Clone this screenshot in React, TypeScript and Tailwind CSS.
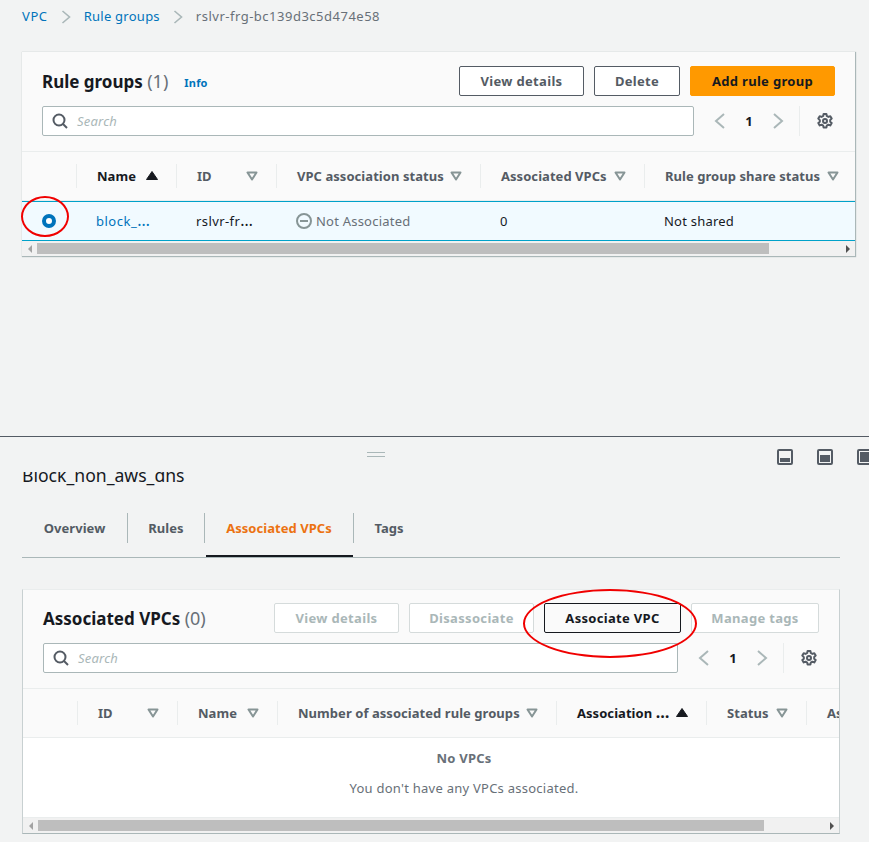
import React from "react";

const Down = () => (
  <svg width="12" height="10" viewBox="0 0 12 10" className="shrink-0">
    <path d="M1.5 1.5h9L6 8.5z" fill="none" stroke="#879596" strokeWidth="2" strokeLinejoin="round" />
  </svg>
);
const Up = () => (
  <svg width="12" height="10" viewBox="0 0 12 10" className="shrink-0">
    <path d="M6 .5L11.5 8.5H.5z" fill="#16191f" stroke="#16191f" strokeLinejoin="round" />
  </svg>
);
const Search = () => (
  <svg width="16" height="16" viewBox="0 0 16 16" fill="none" stroke="#545b64" strokeWidth="2">
    <circle cx="7" cy="7" r="5.5" />
    <path d="M11 11l4 4" />
  </svg>
);
const Chevron = ({ left }: { left?: boolean }) => (
  <svg width="12" height="16" viewBox="0 0 12 16" fill="none" stroke="#aab7b8" strokeWidth="2">
    <path d={left ? "M10 1L2 8l8 7" : "M2 1l8 7-8 7"} />
  </svg>
);
const Gear = () => (
  <svg width="16" height="16" viewBox="0 0 16 16" fill="none" stroke="#545b64" strokeWidth="2">
    <circle cx="8" cy="8" r="2" />
    <path d="M6.6 1h2.8l.4 2 1.6.9 1.9-.7 1.4 2.4-1.5 1.3v1.8l1.5 1.3-1.4 2.4-1.9-.7-1.6.9-.4 2H6.6l-.4-2-1.6-.9-1.9.7-1.4-2.4 1.5-1.3V7.1L1.3 5.6l1.4-2.4 1.9.7 1.6-.9z" strokeLinejoin="round" />
  </svg>
);
const Btn = ({ children, w, kind }: { children: React.ReactNode; w: string; kind: "normal" | "primary" | "disabled" | "dark" }) => {
  const cls = {
    normal: "border-[#545b64] text-[#545b64] bg-white",
    primary: "border-[#ff9900] bg-[#ff9900] text-[#16191f]",
    disabled: "border-[#d5dbdb] text-[#aab7b8] bg-white",
    dark: "border-[#16191f] text-[#16191f] bg-[#fafafa]",
  }[kind];
  return <div className={`h-[30px] shrink-0 flex items-center justify-center pt-px rounded-[2px] border text-[13px] font-bold tracking-[0.32px] ${w} ${cls}`}>{children}</div>;
};
const Bar = ({ thumb }: { thumb: string }) => (
  <div className="h-[15px] bg-[#f1f1f1] flex items-center relative overflow-hidden">
    <div className="w-[15px] flex justify-center shrink-0">
      <div className="w-0 h-0 border-y-[4px] border-y-transparent border-r-[4px] border-r-[#a3a3a3]" />
    </div>
    <div className={`h-[11px] bg-[#bebebe] ${thumb}`} />
    <div className="ml-auto w-[15px] flex justify-center shrink-0">
      <div className="w-0 h-0 border-y-[4px] border-y-transparent border-l-[4px] border-l-[#505050]" />
    </div>
  </div>
);
const Th = ({ w, label, dark }: { w: string; label: React.ReactNode; dark?: boolean }) => (
  <div className={`h-full shrink-0 flex items-center ${w}`}>
    <div className="h-6 w-full flex items-center justify-between pl-5 pr-[18px] border-l border-[#eaeded]">
      <span className={`whitespace-nowrap pt-px tracking-[0.05px] ${dark ? "text-[#16191f]" : "text-[#545b64]"}`}>{label}</span>
      {dark ? <Up /> : <Down />}
    </div>
  </div>
);
const Tab = ({ label, w, active, sep = true }: { label: string; w: string; active?: boolean; sep?: boolean }) => (
  <div className={`relative h-[44px] ${w}`}>
    <div className={`h-[30px] w-full flex items-center justify-center pt-px tracking-[0.05px] ${sep ? "border-r border-[#aab7b8]" : ""} ${active ? "text-[#ec7211]" : "text-[#545b64]"}`}>{label}</div>
    {active && <div className="absolute left-[1px] right-[1px] bottom-0 h-[2px] bg-[#16191f]" />}
  </div>
);
const SearchRow = ({ w }: { w: string }) => (
  <div className="flex items-center">
    <div className={`h-[30px] flex items-center gap-[9px] pl-[9px] bg-white border border-[#aab7b8] rounded-[2px] ${w}`}>
      <Search />
      <span className="text-[13px] italic text-[#aab7b8] pt-[2px] tracking-[0.2px]">Search</span>
    </div>
    <div className="ml-5 flex items-center gap-[17px]">
      <Chevron left />
      <span className="w-[12px] text-center text-[13px] font-bold text-[#16191f] pt-px">1</span>
      <Chevron />
    </div>
    <div className="ml-[15px] h-[30px] border-l border-[#eaeded] pl-[17px] flex items-center"><Gear /></div>
  </div>
);
const PanelIcon = ({ kind }: { kind: "bottom" | "top" | "full" }) => (
  <svg width="16" height="16" viewBox="0 0 16 16" className="shrink-0">
    <rect x="1" y="1" width="14" height="14" rx="1" fill="none" stroke="#545b64" strokeWidth="2" />
    {kind === "bottom" && <rect x="3" y="9" width="10" height="4" fill="#545b64" />}
    {kind === "top" && <rect x="3" y="6" width="10" height="7" fill="#545b64" />}
    {kind === "full" && <rect x="3" y="3" width="10" height="10" fill="#545b64" />}
  </svg>
);
const Dots = () => <span className="text-[16px] leading-none">…</span>;

export default function App() {
  return (
    <div className="relative w-[869px] h-[842px] overflow-hidden bg-[#f2f3f3] text-[13px] text-[#16191f] font-['Noto_Sans',sans-serif]">
      <div className="h-[436px] px-[22px]">
        <div className="h-[52px] pb-[18px] flex items-center gap-[13px] text-[#687078] tracking-[0.25px]">
          <span className="text-[#0073bb] tracking-[0.6px]">VPC</span>
          <svg width="10" height="14" viewBox="0 0 10 14" fill="none" stroke="#aab7b8" strokeWidth="1.6"><path d="M1.5 1l7 6-7 6" /></svg>
          <span className="text-[#0073bb]">Rule groups</span>
          <svg width="10" height="14" viewBox="0 0 10 14" fill="none" stroke="#aab7b8" strokeWidth="1.6"><path d="M1.5 1l7 6-7 6" /></svg>
          <span className="tracking-[0.5px]">rslvr-frg-bc139d3c5d474e58</span>
        </div>

        <div className="w-[834px] h-[205px] bg-[#fafafa] border-b border-r border-[#aab7b8] shadow-[0_0_1px_#aab7b8] flex flex-col">
          <div className="h-[100px] shrink-0 pl-5 pt-[14px] pr-5 border-b border-[#eaeded]">
            <div className="flex items-center h-[30px]">
              <span className="text-[17px] font-bold pt-px">Rule groups <span className="font-normal text-[18px] text-[#687078]">(1)</span></span>
              <span className="ml-[16px] mt-[5px] text-[11px] font-bold text-[#0073bb] tracking-[0.2px]">Info</span>
              <div className="ml-auto flex gap-[10px]">
                <Btn w="w-[125px]" kind="normal">View details</Btn>
                <Btn w="w-[86px]" kind="normal">Delete</Btn>
                <Btn w="w-[145px]" kind="primary">Add rule group</Btn>
              </div>
            </div>
            <div className="mt-[10px]">
              <SearchRow w="w-[652px]" />
            </div>
          </div>
          <div className="h-[49px] shrink-0 flex items-center font-bold border-b border-[#eaeded]">
            <div className="w-[54px] shrink-0" />
            <Th w="w-[100px]" label="Name" dark />
            <Th w="w-[100px]" label="ID" />
            <Th w="w-[204px]" label="VPC association status" />
            <Th w="w-[164px]" label="Associated VPCs" />
            <div className="h-6 flex-1 min-w-0 flex items-center gap-[7px] pl-5 border-l border-[#eaeded] text-[#545b64] whitespace-nowrap">
              <span className="pt-px tracking-[0.05px]">Rule group share status</span> <Down />
            </div>
          </div>
          <div className="h-[40px] shrink-0 flex items-center bg-[#f1faff] border-y border-[#00a1c9] tracking-[0.22px]">
            <div className="w-[54px] shrink-0 flex justify-center -mt-px">
              <div className="w-[14px] h-[14px] rounded-full border-[4px] border-[#0073bb] bg-white" />
            </div>
            <div className="w-[100px] shrink-0 pl-5 pt-px text-[#0073bb] flex items-baseline tracking-[0.5px]">block_<Dots /></div>
            <div className="w-[100px] shrink-0 pl-5 pt-px flex items-baseline tracking-[0.4px]">rslvr-fr<Dots /></div>
            <div className="w-[204px] shrink-0 pl-5 flex items-center gap-[4px] text-[#687078]">
              <svg width="16" height="16" viewBox="0 0 16 16" fill="none" stroke="#879596" strokeWidth="2"><circle cx="8" cy="8" r="7" /><path d="M4 8h8" /></svg>
              <span className="pt-px">Not Associated</span>
            </div>
            <div className="w-[164px] shrink-0 pl-5 pt-px">0</div>
            <div className="pl-5 pt-px">Not shared</div>
          </div>
          <Bar thumb="w-[732px]" />
        </div>
      </div>

      <div className="h-[406px] border-t border-[#545b64] pl-[22px] relative">
        <div className="h-[35px]" />
        <div className="h-[18px] overflow-hidden">
          <div className="-mt-[9px] text-[17.6px] leading-[24px] whitespace-nowrap">Block_non_aws_dns</div>
        </div>
        <div className="w-[818px] h-[45px] mt-[23px] border-b border-[#aab7b8] font-bold flex items-start">
          <Tab w="w-[106px]" label="Overview" />
          <Tab w="w-[77px]" label="Rules" />
          <Tab w="w-[149px]" label="Associated VPCs" active />
          <Tab w="w-[70px]" label="Tags" sep={false} />
        </div>
        <div className="w-[818px] mt-[31px] h-[245px] bg-white border-b border-x border-t border-b-[#aab7b8] border-x-[#c8d0d1] border-t-[#eaeded] flex flex-col">
          <div className="h-[99px] shrink-0 bg-[#fafafa] pl-5 pr-5 pt-[13px] border-b border-[#eaeded]">
            <div className="flex items-center h-[30px]">
              <span className="text-[17px] font-bold pt-px">Associated VPCs <span className="font-normal text-[18px] text-[#687078]">(0)</span></span>
              <div className="ml-auto flex gap-[10px]">
                <Btn w="w-[125px]" kind="disabled">View details</Btn>
                <Btn w="w-[125px]" kind="disabled">Disassociate</Btn>
                <Btn w="w-[137px]" kind="dark">Associate VPC</Btn>
                <Btn w="w-[128px]" kind="disabled">Manage tags</Btn>
              </div>
            </div>
            <div className="mt-[10px]">
              <SearchRow w="w-[635px]" />
            </div>
          </div>
          <div className="h-[49px] shrink-0 bg-[#fafafa] flex items-center font-bold border-b border-[#eaeded] overflow-hidden">
            <div className="w-[54px] shrink-0" />
            <Th w="w-[100px]" label="ID" />
            <Th w="w-[100px]" label="Name" />
            <Th w="w-[279px]" label="Number of associated rule groups" />
            <Th w="w-[150px]" label={<>Association <Dots /></>} dark />
            <Th w="w-[100px]" label="Status" />
            <div className="h-6 pl-5 pt-px border-l border-[#eaeded] text-[#545b64] flex items-center">As</div>
          </div>
          <div className="flex-1 flex flex-col items-center pt-[11px] pl-[66px] text-[#687078] tracking-[0.25px]">
            <div className="font-bold h-5 flex items-center">No VPCs</div>
            <div className="mt-[10px] h-5 flex items-center">You don't have any VPCs associated.</div>
          </div>
          <div className="border-t border-[#eaeded]"><Bar thumb="w-[726px]" /></div>
        </div>
        <div className="absolute left-[777px] top-[12px] flex gap-6">
          <PanelIcon kind="bottom" />
          <PanelIcon kind="top" />
          <PanelIcon kind="full" />
        </div>
        <div className="absolute left-[367px] top-[15px] w-[18px] h-[5px] border-y border-[#aab7b8]" />
      </div>

      <div className="absolute left-[21px] top-[196px] w-[48px] h-[41px] rounded-[50%] border-2 border-[#f00000]" />
      <div className="absolute left-[523px] top-[589px] w-[174px] h-[69px] rounded-[50%] border-2 border-[#f00000]" />
    </div>
  );
}
